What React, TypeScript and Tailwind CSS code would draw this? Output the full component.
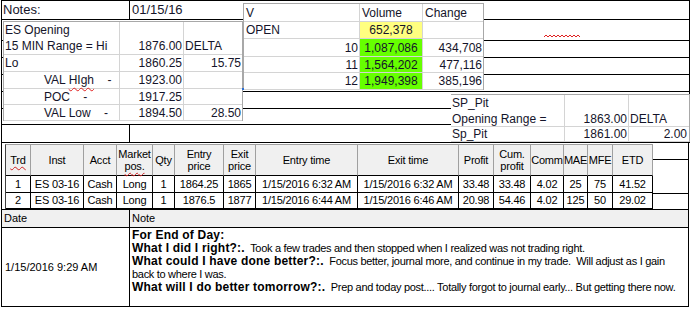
import React from "react";

const ink = "text-[#14142a]";

const openingRows = [
  { h: "h-[16px]", a: "ES Opening", b: "", c: "", indent: false, line: false },
  { h: "h-[17px]", a: "15 MIN Range = Hi", b: "1876.00", c: "DELTA", indent: false, line: true },
  { h: "h-[17px]", a: "Lo", b: "1860.25", c: "15.75", indent: false, line: true },
  { h: "h-[17px]", a: "VAL", b: "1923.00", c: "", indent: true, line: true },
  { h: "h-[16px]", a: "POC    -", b: "1917.25", c: "", indent: true, line: true },
  { h: "h-[16px]", a: "VAL Low    -", b: "1894.50", c: "28.50", indent: true, line: true },
];

const volumeRows = [
  { h: "h-[18px]", a: "V", b: "Volume", c: "Change", head: true, bg: "" },
  { h: "h-[17px]", a: "OPEN", b: "652,378", c: "", head: false, bg: "bg-[#ffff80]" },
  { h: "h-[18px]", a: "10", b: "1,087,086", c: "434,708", head: false, bg: "bg-[#66ff00]" },
  { h: "h-[16px]", a: "11", b: "1,564,202", c: "477,116", head: false, bg: "bg-[#66ff00]" },
  { h: "h-[17px]", a: "12", b: "1,949,398", c: "385,196", head: false, bg: "bg-[#66ff00]" },
];

const headers = [
  ["Trd"], ["Inst"], ["Acct"], ["Market", "pos."], ["Qty"], ["Entry", "price"], ["Exit", "price"],
  ["Entry time"], ["Exit time"], ["Profit"], ["Cum.", "profit"], ["Comm"], ["MAE"], ["MFE"], ["ETD"],
];

const trades = [
  ["1", "ES 03-16", "Cash", "Long", "1", "1864.25", "1865", "1/15/2016 6:32 AM", "1/15/2016 6:32 AM", "33.48", "33.48", "4.02", "25", "75", "41.52"],
  ["2", "ES 03-16", "Cash", "Long", "1", "1876.5", "1877", "1/15/2016 6:44 AM", "1/15/2016 6:46 AM", "20.98", "54.46", "4.02", "125", "50", "29.02"],
];

const notes = [
  { b: "For End of Day:", t: "" },
  { b: "What I did I right?:.", t: "  Took a few trades and then stopped when I realized was not trading right." },
  { b: "What could I have done better?:.", t: "  Focus better, journal more, and continue in my trade.  Will adjust as I gain" },
  { b: "", t: "back to where I was." },
  { b: "What will I do better tomorrow?:.", t: "  Prep and today post.... Totally forgot to journal early... But getting there now." },
];

function OpeningSheet() {
  return (
    <div className={`absolute left-[3px] top-[21px] w-[240px] border-l border-t border-r border-[#a8a8a8] bg-white text-[12px] ${ink}`}>
      {openingRows.map((r, i) => (
        <div key={i} className={`flex ${r.h} ${r.line ? "border-b border-[#d4d4d4]" : ""}`}>
          <div className={`flex w-[116px] items-center whitespace-pre border-r border-[#d4d4d4] ${r.indent ? "pl-[40px]" : "pl-px"}`}>
            {i === 3 ? (
              <>
                {"VAL "}
                <span className="underline decoration-wavy decoration-[#e02020] decoration-1 underline-offset-[3px]">HIgh</span>
                {"    -"}
              </>
            ) : (
              r.a
            )}
          </div>
          <div className="flex w-[64px] items-center justify-end border-r border-[#d4d4d4] pr-px">{r.b}</div>
          <div className={`flex flex-1 items-center ${r.c === "DELTA" ? "pl-px" : "justify-end pr-px"}`}>{r.c}</div>
        </div>
      ))}
    </div>
  );
}

function VolumeSheet() {
  return (
    <div className={`absolute left-[243px] top-[3px] w-[241px] border-l border-t border-r border-[#a8a8a8] bg-white text-[12px] ${ink}`}>
      {volumeRows.map((r, i) => (
        <div key={i} className={`flex ${r.h} border-b border-[#d4d4d4]`}>
          <div className={`flex w-[116px] items-center border-r border-[#d4d4d4] ${r.head || i === 1 ? "pl-[2px]" : "justify-end pr-px"}`}>{r.a}</div>
          <div className={`flex w-[63px] items-center border-r border-[#d4d4d4] ${r.bg} ${r.head ? "pl-[2px]" : "justify-center"}`}>{r.b}</div>
          <div className={`flex flex-1 items-center ${r.head ? "pl-[2px]" : "justify-end pr-px"}`}>{r.c}</div>
        </div>
      ))}
    </div>
  );
}

function PitSheet() {
  return (
    <div className={`absolute left-[451px] top-[94px] w-[239px] border-t border-r border-[#a8a8a8] bg-white text-[12px] ${ink}`}>
      <div className="flex h-[16px]">
        <div className="flex w-[114px] items-center border-r border-[#d4d4d4] pl-px">SP_Pit</div>
        <div className="w-[64px] border-r border-[#d4d4d4]" />
        <div className="flex-1" />
      </div>
      <div className="flex h-[16px] border-b border-[#d4d4d4]">
        <div className="flex w-[114px] items-center border-r border-[#d4d4d4] pl-px">Opening Range =</div>
        <div className="flex w-[64px] items-center justify-end border-r border-[#d4d4d4] pr-px">1863.00</div>
        <div className="flex flex-1 items-center pl-px">DELTA</div>
      </div>
      <div className="flex h-[15px] border-b border-[#d4d4d4]">
        <div className="flex w-[114px] items-center border-r border-[#d4d4d4] pl-px">Sp_Pit</div>
        <div className="flex w-[64px] items-center justify-end border-r border-[#d4d4d4] pr-px">1861.00</div>
        <div className="flex flex-1 items-center justify-end pr-[2px]">2.00</div>
      </div>
    </div>
  );
}

function TradeTable() {
  return (
    <div className="mt-px grid h-[65px] w-[648px] shrink-0 grid-cols-[25px_53px_33px_36px_22px_49px_32px_102px_101px_35px_37px_33px_24px_25px_40px] grid-rows-[31px_17px_16px] border-l border-t border-l-[#404040] border-t-[#a0a0a0] text-[11px] tracking-[-0.2px] text-black">
      {headers.map((h, i) => (
        <div key={i} className="flex flex-col items-center justify-center border-b border-r border-b-black border-r-[#a0a0a0] bg-[#f0f0f0] leading-[12px]">
          {h.map((line, j) =>
            i === 0 || (i === 3 && j === 1) ? (
              <span key={j} className="underline decoration-wavy decoration-[#d02020] decoration-1 underline-offset-2">{line}</span>
            ) : (
              <span key={j}>{line}</span>
            )
          )}
        </div>
      ))}
      {trades.map((row, r) =>
        row.map((v, c) => (
          <div key={`${r}-${c}`} className="flex items-center justify-center whitespace-nowrap border-b border-r border-black">
            {v}
          </div>
        ))
      )}
    </div>
  );
}

export default function App() {
  return (
    <div className="relative h-[309px] w-[693px] overflow-hidden bg-white font-['Liberation_Sans',Arial,sans-serif] text-black">
      {/* sheet with pasted snippets */}
      <section className="relative h-[143px]">
        <div className="ml-px h-[143px] w-[689px] border-x border-t border-black">
          <div className={`flex h-[19px] border-b border-black text-[13px] ${ink}`}>
            <div className="w-[128px] border-r border-black pl-px leading-[18px]">Notes:</div>
            <div className="pl-[2px] leading-[18px]">01/15/16</div>
          </div>
          <div className="h-[21px] border-b border-black" />
          <div className="h-[17px] border-b border-black" />
          <div className="h-[17px] border-b border-black" />
          <div className="h-[17px] border-b border-black" />
          <div className="h-[17px] border-b border-black" />
          <div className="h-[16px] border-b border-black" />
          <div className="flex h-[18px] border-b border-black">
            <div className="w-[128px] border-r border-black" />
          </div>
        </div>
        <OpeningSheet />
        <VolumeSheet />
        <PitSheet />
        <svg className="absolute left-[544px] top-[34px]" width="37" height="4" viewBox="0 0 37 4">
          <path d="M0 3 L2 1 L4 3 L6 1 L8 3 L10 1 L12 3 L14 1 L16 3 L18 1 L20 3 L22 1 L24 3 L26 1 L28 3 L30 1 L32 3 L34 1 L36 3" fill="none" stroke="#e02020" strokeWidth="1" />
        </svg>
        <div className="absolute left-[242px] top-[88px] h-[2px] w-[2px] bg-[#2a6fd6]" />
      </section>

      {/* trades grid */}
      <section className="flex h-[66px]">
        <div className="ml-px w-[4px] shrink-0 border-l border-black" />
        <TradeTable />
        <div className="w-[36px] shrink-0 border-r border-black">
          <div className="h-[17px] border-b border-black" />
          <div className="h-[34px] border-b border-black" />
        </div>
      </section>

      {/* note header */}
      <div className="ml-px flex h-[19px] w-[688px] border border-black bg-[#f0f0f0] text-[11px]">
        <div className="flex w-[128px] shrink-0 items-center border-r border-black pl-[2px]">Date</div>
        <div className="flex items-center pl-[2px]">Note</div>
      </div>

      {/* note row */}
      <div className="ml-px flex h-[79px] w-[688px] border-x border-b border-black text-[11px]">
        <div className="flex w-[128px] shrink-0 items-center border-r border-black pl-[3px]">1/15/2016 9:29 AM</div>
        <div className="min-w-0 flex-1 overflow-hidden pl-[2px] pt-px leading-[13px]">
          {notes.map((n, i) => (
            <div key={i} className="whitespace-pre">
              {n.b && <span className="text-[12px] font-bold tracking-[0.2px]">{n.b}</span>}
              <span className="text-[11px] tracking-[-0.3px]">{n.t}</span>
            </div>
          ))}
        </div>
      </div>
    </div>
  );
}
